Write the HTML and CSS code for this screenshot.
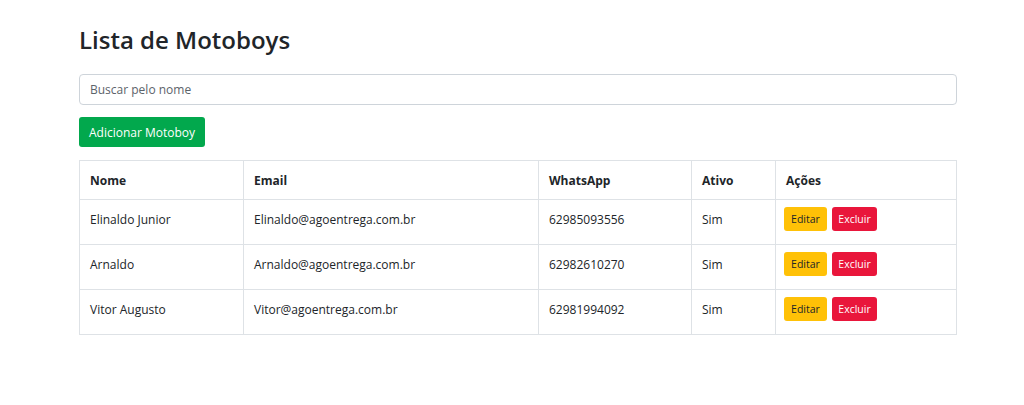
FILE: index.html
```html
<!DOCTYPE html>
<html lang="pt-BR">
<head>
<meta charset="utf-8">
<title>Lista de Motoboys</title>
<link rel="stylesheet" href="styles.css">
</head>
<body>
<div class="container">
  <h2 class="title">Lista de Motoboys</h2>
  <input class="search" type="text" placeholder="Buscar pelo nome">
  <button class="btn btn-success">Adicionar Motoboy</button>
  <table class="table">
    <thead>
      <tr><th class="c1">Nome</th><th class="c2">Email</th><th class="c3">WhatsApp</th><th class="c4">Ativo</th><th>Ações</th></tr>
    </thead>
    <tbody>
      <tr><td>Elinaldo Junior</td><td>Elinaldo@agoentrega.com.br</td><td>62985093556</td><td>Sim</td><td><span class="actions"><button class="btn-sm warn">Editar</button><button class="btn-sm danger">Excluir</button></span></td></tr>
      <tr><td>Arnaldo</td><td>Arnaldo@agoentrega.com.br</td><td>62982610270</td><td>Sim</td><td><span class="actions"><button class="btn-sm warn">Editar</button><button class="btn-sm danger">Excluir</button></span></td></tr>
      <tr><td>Vitor Augusto</td><td>Vitor@agoentrega.com.br</td><td>62981994092</td><td>Sim</td><td><span class="actions"><button class="btn-sm warn">Editar</button><button class="btn-sm danger">Excluir</button></span></td></tr>
    </tbody>
  </table>
</div>
</body>
</html>
```
FILE: styles.css
```css
* { box-sizing: border-box; }
body {
  margin: 0;
  background: #fff;
  font-family: "Open Sans", "Noto Sans", sans-serif;
  color: #212529;
  font-size: 12px;
}
.container {
  width: 878px;
  margin-left: 79px;
  padding-top: 23px;
  display: flex;
  flex-direction: column;
  align-items: flex-start;
}
.title {
  margin: 0 0 17px 0;
  font-size: 24px;
  font-weight: 600;
  line-height: 34px;
  color: #212529;
}
.search {
  width: 100%;
  height: 31px;
  border: 1px solid #ced4da;
  border-radius: 4px;
  padding: 0 10px;
  font-family: inherit;
  font-size: 12px;
  color: #212529;
  margin: 0 0 12px 0;
}
.search::placeholder { color: #5c636a; }
.btn {
  border: none;
  border-radius: 3px;
  font-family: inherit;
  font-size: 12px;
  height: 30px;
  padding: 0 10px;
  cursor: pointer;
  margin-bottom: 13px;
}
.btn-success { background: #02a84d; color: #fff; }
.table {
  width: 100%;
  border-collapse: collapse;
  border: 1px solid #dee2e6;
  font-size: 12px;
}
.table th, .table td {
  border: 1px solid #dee2e6;
  text-align: left;
  padding: 0 10px;
  vertical-align: middle;
}
.table th { height: 39px; font-weight: 700; }
.table td { height: 45px; padding-bottom: 6px; }
.c1 { width: 164px; }
.c2 { width: 295px; }
.c3 { width: 153px; }
.c4 { width: 84px; }
.actions { display: flex; gap: 5px; margin-left: -2px; }
.btn-sm {
  border: none;
  border-radius: 3px;
  font-family: inherit;
  font-size: 10.5px;
  height: 24px;
  padding: 0;
}
.warn { background: #ffc107; color: #212529; width: 43px; }
.danger { background: #e9163b; color: #fff; width: 45px; }
```
